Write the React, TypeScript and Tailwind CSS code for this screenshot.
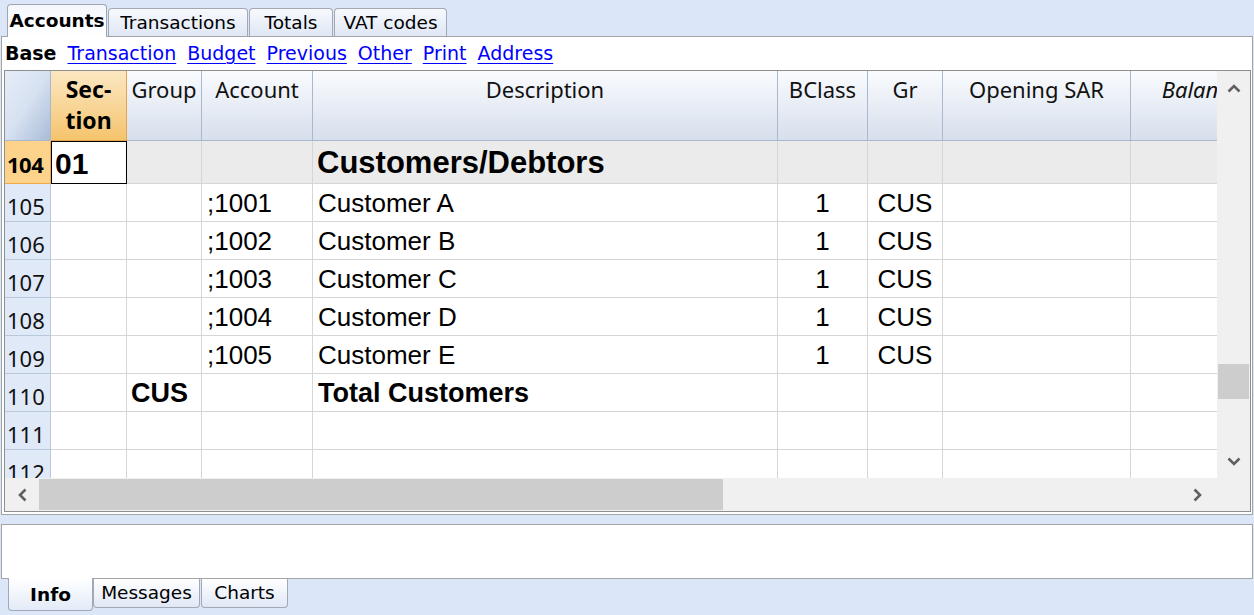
import React from "react";

const Up = () => (
  <svg width="14" height="9" viewBox="0 0 14 9"><polyline points="1.5,7.5 7,2 12.5,7.5" fill="none" stroke="#606060" strokeWidth="2.6" /></svg>
);
const Down = () => (
  <svg width="14" height="9" viewBox="0 0 14 9"><polyline points="1.5,1.5 7,7 12.5,1.5" fill="none" stroke="#606060" strokeWidth="2.6" /></svg>
);
const Left = () => (
  <svg width="9" height="14" viewBox="0 0 9 14"><polyline points="7.5,1.5 2,7 7.5,12.5" fill="none" stroke="#606060" strokeWidth="2.6" /></svg>
);
const Right = () => (
  <svg width="9" height="14" viewBox="0 0 9 14"><polyline points="1.5,1.5 7,7 1.5,12.5" fill="none" stroke="#606060" strokeWidth="2.6" /></svg>
);

type Row = { n: string; grp?: string; acc?: string; desc?: string; bcl?: string; gr?: string; bold?: boolean };

const rows: Row[] = [
  { n: "105", acc: ";1001", desc: "Customer A", bcl: "1", gr: "CUS" },
  { n: "106", acc: ";1002", desc: "Customer B", bcl: "1", gr: "CUS" },
  { n: "107", acc: ";1003", desc: "Customer C", bcl: "1", gr: "CUS" },
  { n: "108", acc: ";1004", desc: "Customer D", bcl: "1", gr: "CUS" },
  { n: "109", acc: ";1005", desc: "Customer E", bcl: "1", gr: "CUS" },
  { n: "110", grp: "CUS", desc: "Total Customers", bold: true },
  { n: "111" },
  { n: "112" },
];

const cell = "shrink-0 h-full border-r border-b border-[#d6d6d6] flex items-center pt-[2px] overflow-hidden whitespace-nowrap";
const hcell =
  "shrink-0 h-full border-r border-b border-[#a9b9cd] bg-gradient-to-b from-[#f9fbfe] to-[#d7dfec] flex justify-center pt-[3px] leading-[31px] text-[22px] text-[#111] font-['Noto_Sans',sans-serif] whitespace-nowrap overflow-hidden";

export default function App() {
  return (
    <div className="w-[1254px] h-[615px] bg-[#dbe6f8] flex flex-col overflow-hidden font-['DejaVu_Sans',sans-serif] text-black">
      {/* top tabs */}
      <div className="h-[36px] shrink-0 flex items-end pl-[7px] gap-[1px] relative z-10">
        <div className="w-[100px] h-[33px] relative top-[1px] bg-gradient-to-b from-[#f4f7fc] to-white border border-b-0 border-[#9ea6b2] rounded-t-[4px] flex items-center justify-center font-bold text-[18.5px]">
          Accounts
        </div>
        {[
          ["Transactions", "w-[140px]"],
          ["Totals", "w-[84px]"],
          ["VAT codes", "w-[113px]"],
        ].map(([t, w]) => (
          <div
            key={t}
            className={`${w} h-[28px] bg-gradient-to-b from-[#f7f9fd] to-[#dfe7f5] border border-b-0 border-[#a3a9b4] rounded-t-[4px] flex items-center justify-center text-[18.5px]`}
          >
            {t}
          </div>
        ))}
      </div>

      {/* main panel */}
      <div className="mx-[1px] h-[479px] shrink-0 bg-white border border-[#a4a4a4] flex flex-col">
        <div className="h-[33px] shrink-0 flex items-center pl-[3px] gap-[11px] text-[19px]">
          <span className="font-bold">Base</span>
          {["Transaction", "Budget", "Previous", "Other", "Print", "Address"].map((l) => (
            <span key={l} className="text-[#0000ff] underline underline-offset-[3px]">
              {l}
            </span>
          ))}
        </div>
        <div className="ml-[2px] mr-[1px] mb-[2px] flex-1 border border-[#8e8e8e] flex flex-col overflow-hidden">
          <div className="flex-1 flex overflow-hidden">
            {/* grid */}
            <div className="flex-1 overflow-hidden flex flex-col font-['Liberation_Sans',sans-serif]">
              {/* header */}
              <div className="h-[70px] shrink-0 flex">
                <div className="w-[46px] shrink-0 h-full border-r border-b border-[#a9b9cd] bg-gradient-to-br from-[#e6edf8] via-[#d6e1f1] to-[#a9bcd6]" />
                <div className="w-[76px] shrink-0 h-full border-r border-b border-[#e6a24c] bg-gradient-to-b from-[#fbe7c1] to-[#f5c46c] flex flex-col items-center pt-[3px] leading-[31px] text-[23px] font-bold font-['Noto_Sans',sans-serif]">
                  <span>Sec-</span>
                  <span>tion</span>
                </div>
                <div className={`${hcell} w-[75px]`}>Group</div>
                <div className={`${hcell} w-[111px]`}>Account</div>
                <div className={`${hcell} w-[465px]`}>Description</div>
                <div className={`${hcell} w-[90px]`}>BClass</div>
                <div className={`${hcell} w-[75px]`}>Gr</div>
                <div className={`${hcell} w-[188px]`}>Opening SAR</div>
                <div className={`${hcell} w-[140px] italic`}>Balance</div>
              </div>
              {/* row 104 */}
              <div className="h-[43px] shrink-0 flex">
                <div className="w-[46px] shrink-0 h-full border-r border-b border-[#f0a848] bg-[#fdd38c] flex items-center pt-[5px] pl-[2px] text-[22px] font-bold font-['Noto_Sans',sans-serif] tracking-[-0.5px]">
                  104
                </div>
                <div className="w-[76px] shrink-0 h-full border border-black bg-white flex items-center pt-[2px] pl-[3px] text-[30px] font-bold">
                  01
                </div>
                <div className={`${cell} w-[75px] bg-[#ebebeb]`} />
                <div className={`${cell} w-[111px] bg-[#ebebeb]`} />
                <div className={`${cell} w-[465px] bg-[#ebebeb] pl-[4px] text-[31px] font-bold`}>Customers/Debtors</div>
                <div className={`${cell} w-[90px] bg-[#ebebeb]`} />
                <div className={`${cell} w-[75px] bg-[#ebebeb]`} />
                <div className={`${cell} w-[188px] bg-[#ebebeb]`} />
                <div className={`${cell} w-[140px] bg-[#ebebeb]`} />
              </div>
              {rows.map((r) => (
                <div key={r.n} className="h-[38px] shrink-0 flex text-[26px]">
                  <div className="w-[46px] shrink-0 h-full border-r border-b border-[#b9c8dc] bg-[#dfe9f8] flex items-center pt-[7px] pl-[2px] text-[22px] font-['Noto_Sans',sans-serif] text-[#111]">
                    {r.n}
                  </div>
                  <div className={`${cell} w-[76px]`} />
                  <div className={`${cell} w-[75px] pl-[4px] ${r.bold ? "font-bold text-[27px]" : ""}`}>{r.grp}</div>
                  <div className={`${cell} w-[111px] pl-[5px]`}>{r.acc}</div>
                  <div className={`${cell} w-[465px] pl-[5px] ${r.bold ? "font-bold text-[27px]" : ""}`}>{r.desc}</div>
                  <div className={`${cell} w-[90px] justify-center`}>{r.bcl}</div>
                  <div className={`${cell} w-[75px] justify-center`}>{r.gr}</div>
                  <div className={`${cell} w-[188px]`} />
                  <div className={`${cell} w-[140px]`} />
                </div>
              ))}
            </div>
            {/* vertical scrollbar */}
            <div className="w-[33px] shrink-0 bg-[#f0f0f0] flex flex-col">
              <div className="h-[33px] flex items-center justify-center pt-[2px]">
                <Up />
              </div>
              <div className="flex-1 flex flex-col">
                <div className="mt-[260px] h-[35px] mx-[1px] bg-[#cdcdcd]" />
              </div>
              <div className="h-[34px] flex items-center justify-center">
                <Down />
              </div>
            </div>
          </div>
          {/* horizontal scrollbar */}
          <div className="h-[33px] shrink-0 flex bg-[#f0f0f0]">
            <div className="w-[34px] flex items-center justify-center">
              <Left />
            </div>
            <div className="w-[684px] my-[1px] bg-[#cdcdcd]" />
            <div className="flex-1" />
            <div className="w-[34px] flex items-center justify-center">
              <Right />
            </div>
            <div className="w-[36px]" />
          </div>
        </div>
      </div>

      {/* info panel */}
      <div className="mt-[9px] mx-[1px] h-[55px] shrink-0 bg-white border border-[#a4a4a4]" />
      <div className="flex pl-[8px] -mt-[1px] relative z-10 items-start">
        <div className="w-[85px] h-[33px] bg-gradient-to-b from-white to-[#e3ebf8] border border-t-0 border-[#a3a9b4] rounded-b-[4px] flex items-center justify-center pt-[2px] font-bold text-[18.5px]">
          Info
        </div>
        <div className="w-[107px] h-[29px] mt-[1px] bg-gradient-to-b from-white to-[#e0e8f6] border border-t-0 border-[#a3a9b4] rounded-b-[4px] flex items-center justify-center text-[18.5px]">
          Messages
        </div>
        <div className="w-[87px] ml-[1px] h-[29px] mt-[1px] bg-gradient-to-b from-white to-[#e0e8f6] border border-t-0 border-[#a3a9b4] rounded-b-[4px] flex items-center justify-center text-[18.5px]">
          Charts
        </div>
      </div>
    </div>
  );
}
